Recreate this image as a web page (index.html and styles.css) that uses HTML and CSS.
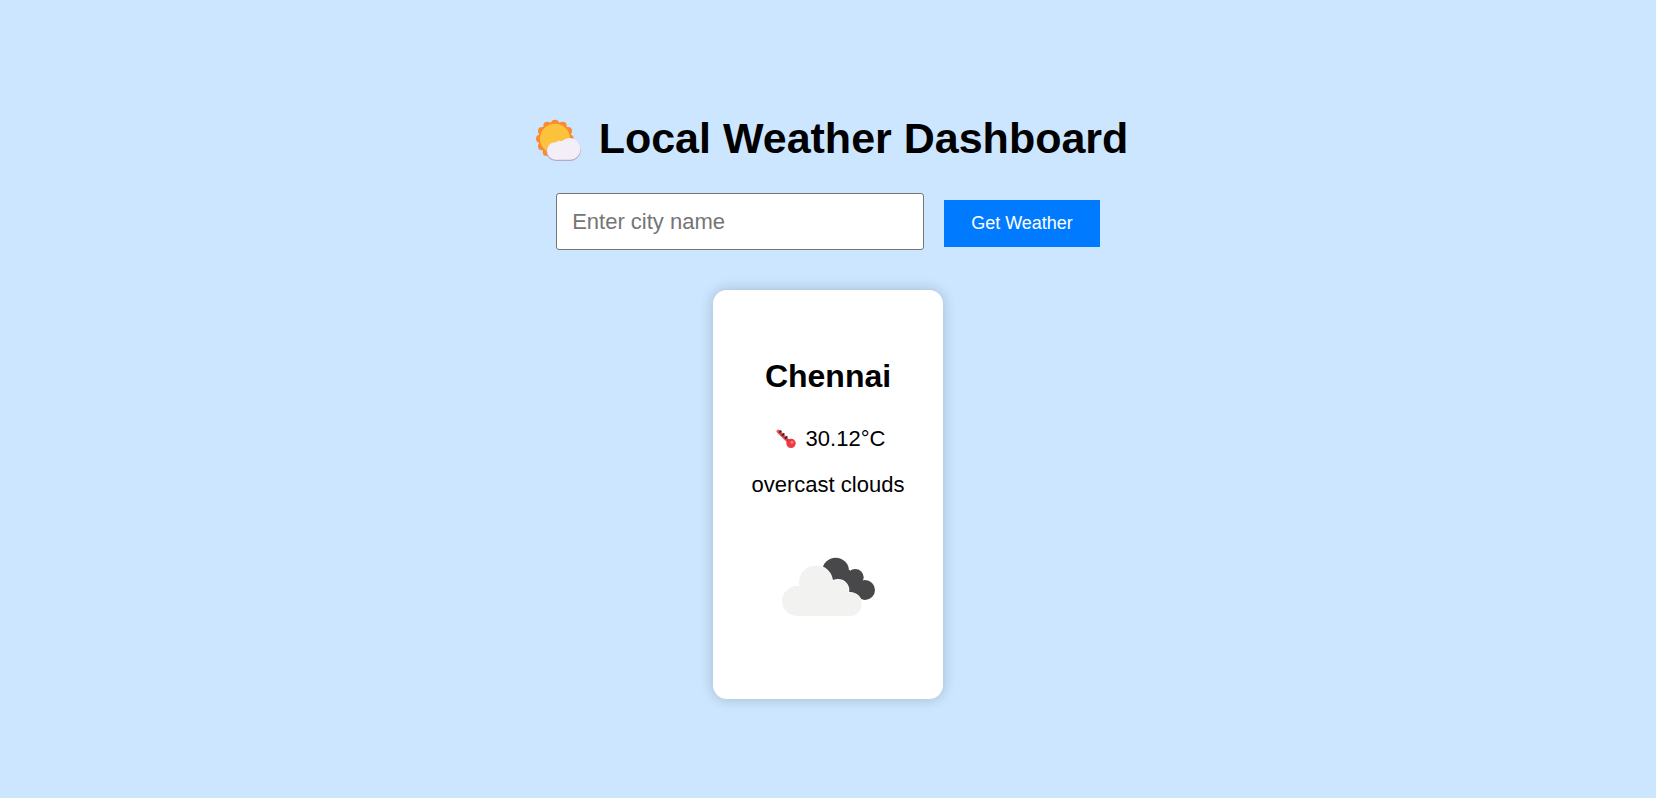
FILE: index.html
```html
<!DOCTYPE html>
<html lang="en">
<head>
<meta charset="utf-8">
<meta name="viewport" content="width=device-width, initial-scale=1">
<title>Local Weather Dashboard</title>
<link rel="stylesheet" href="styles.css">
</head>
<body>
<main class="dashboard">
  <h1 class="title">
    <svg class="title-icon" viewBox="24 24 174 150" aria-hidden="true">
      <g fill="#f98a2f">
        <circle cx="105" cy="101" r="50"/>
        <circle cx="105" cy="56" r="12"/>
        <circle cx="128" cy="62" r="12"/>
        <circle cx="144" cy="78" r="12"/>
        <circle cx="149" cy="101" r="12"/>
        <circle cx="82" cy="62" r="12"/>
        <circle cx="66" cy="78" r="12"/>
        <circle cx="60" cy="101" r="12"/>
        <circle cx="66" cy="124" r="12"/>
        <circle cx="80" cy="141" r="12"/>
      </g>
      <circle cx="105" cy="101" r="45" fill="#fcc23c"/>
      <path d="M107 168a28 28 0 0 1-28-28c0-15 13-26 28-24 5-6 13-7 20-4l20-13a34 34 0 0 1 2 69z" fill="#b5abc9"/>
      <path d="M106 164a26 26 0 0 1-25-26c0-17 13-27 27-26 5-6 13-6 18-3 5-6 14-10 23-10a32 32 0 0 1 0 65z" fill="#f3eef8"/>
    </svg>
    <span>Local Weather Dashboard</span>
  </h1>
  <form class="search">
    <input class="city" type="text" placeholder="Enter city name" aria-label="City name">
    <button class="submit" type="button">Get Weather</button>
  </form>
  <section class="card">
    <h2 class="place">Chennai</h2>
    <p class="reading">
      <svg class="reading-icon" viewBox="213 435 87 78" aria-hidden="true">
        <path d="M235 451L271 486" stroke="#ef5555" stroke-width="11" stroke-linecap="round"/>
        <circle cx="273" cy="487" r="14" fill="#ee3a40"/>
        <path d="M240 456L268 483" stroke="#d9343c" stroke-width="4"/>
        <circle cx="276" cy="484" r="4" fill="#ff858b"/>
        <path d="M238 455l6-6M246 464l7-7M255 473l7-7" stroke="#33252b" stroke-width="5"/>
      </svg>
      <span>30.12°C</span>
    </p>
    <p class="condition">overcast clouds</p>
    <svg class="sky" viewBox="181 72 405 405" role="img" aria-label="Overcast clouds">
      <g fill="#48484a">
        <circle cx="408" cy="213" r="40"/>
        <circle cx="467" cy="232" r="25"/>
        <circle cx="496" cy="270" r="30"/>
        <path d="M390 215L450 210L480 240L495 299L420 270z"/>
      </g>
      <g fill="#f2f2f1" stroke="#fff" stroke-width="4" paint-order="stroke">
        <circle cx="348" cy="247" r="50"/>
        <circle cx="415" cy="271" r="32"/>
        <circle cx="451" cy="313" r="35"/>
      </g>
      <g fill="#f2f2f1">
        <circle cx="292" cy="303" r="45"/>
        <circle cx="348" cy="247" r="49"/>
        <circle cx="415" cy="271" r="31"/>
        <circle cx="451" cy="313" r="34"/>
        <path d="M292 258L415 260L451 348H292z"/>
      </g>
    </svg>
  </section>
</main>
</body>
</html>
```
FILE: styles.css
```css
* {
  box-sizing: border-box;
}

body {
  margin: 0;
  min-height: 100vh;
  background: #cce6ff;
  color: #000;
  font-family: Arial, "Liberation Sans", sans-serif;
  font-size: 22px;
  line-height: 26px;
}

.dashboard {
  display: flex;
  flex-direction: column;
  align-items: center;
  padding: 113px 20px 40px;
}

.title {
  display: flex;
  align-items: center;
  gap: 13px;
  margin: 0 0 30px;
  font-size: 43px;
  line-height: 50px;
}

.title-icon {
  flex: none;
  width: 58px;
  height: 50px;
}

.search {
  display: flex;
  flex-wrap: wrap;
  align-items: baseline;
  justify-content: center;
  gap: 20px;
  margin-bottom: 40px;
}

.city {
  width: 368px;
  max-width: 100%;
  height: 57px;
  padding: 15px;
  border: 1px solid #767676;
  border-radius: 3px;
  background: #fff;
  font: inherit;
}

.city::placeholder {
  color: #757575;
}

.submit {
  padding: 13px 27px;
  border: 0;
  background: #007bff;
  color: #fff;
  font: inherit;
  font-size: 18px;
  line-height: 21px;
  cursor: pointer;
}

.card {
  display: flex;
  flex-direction: column;
  align-items: center;
  padding: 68px 39px 40px;
  border-radius: 14px;
  background: #fff;
  box-shadow: 0 0 14px rgba(0, 0, 0, 0.2);
}

.place {
  margin: 0 0 32px;
  font-size: 32px;
  line-height: 36px;
}

.reading {
  display: flex;
  gap: 6px;
  margin: 0 0 20px;
}

.reading-icon {
  flex: none;
  width: 29px;
  height: 26px;
}

.condition {
  margin: 0 0 26px;
}

.sky {
  width: 135px;
  height: 135px;
}
```
